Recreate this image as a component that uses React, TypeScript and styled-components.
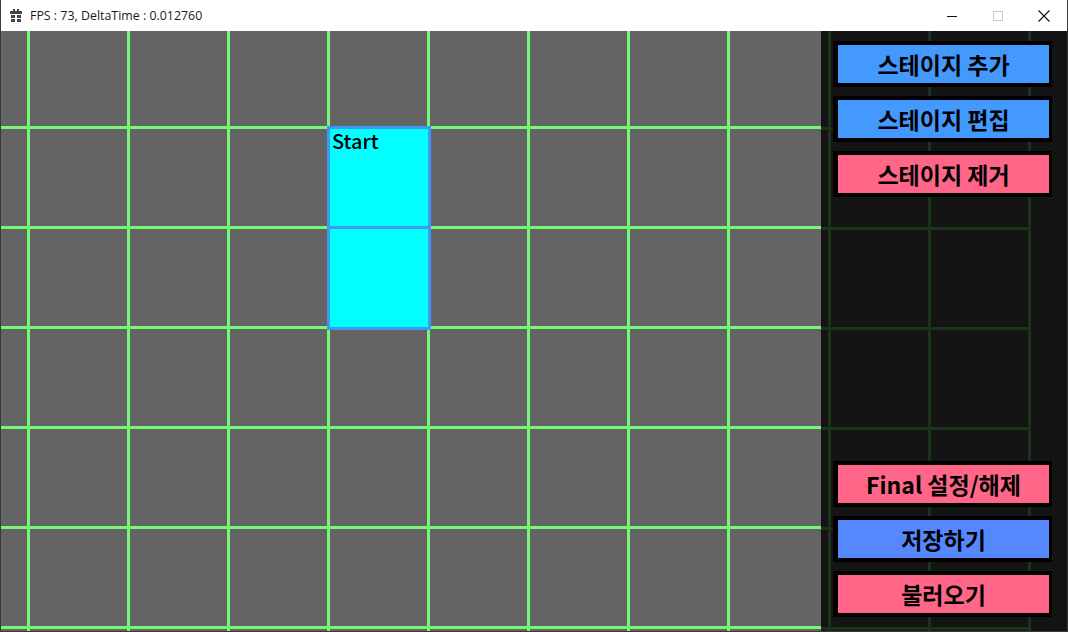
import React from "react";
import styled, { createGlobalStyle } from "styled-components";

const Global = createGlobalStyle`
  html, body { margin: 0; padding: 0; background: #ffffff; }
  body { font-family: "Noto Sans", "Noto Sans CJK KR", sans-serif; }
`;

const Window = styled.div`
  width: 1068px;
  height: 632px;
  box-sizing: border-box;
  display: flex;
  flex-direction: column;
  border-left: 1px solid #3a3a3a;
  border-right: 1px solid #3a3a3a;
  border-bottom: 1px solid #3a3a3a;
  overflow: hidden;
`;

const TitleBar = styled.div`
  height: 31px;
  flex: none;
  display: flex;
  align-items: center;
  background: #ffffff;
  padding-left: 9px;
`;

const TitleText = styled.span`
  font-family: "Open Sans", "Noto Sans", sans-serif;
  font-size: 12.4px;
  color: #1a1a1a;
  margin-left: 8px;
`;

const Controls = styled.div`
  margin-left: auto;
  display: flex;
  height: 100%;
`;

const Ctl = styled.div`
  width: 46px;
  height: 100%;
  display: flex;
  align-items: center;
  justify-content: center;
`;

const Client = styled.div`
  flex: 1;
  display: flex;
  min-height: 0;
`;

const Canvas = styled.div`
  position: relative;
  width: 820px;
  flex: none;
  background-color: #646464;
  background-image:
    linear-gradient(to right, #74f974 0, #74f974 3px, transparent 3px),
    linear-gradient(to bottom, #74f974 0, #74f974 3px, transparent 3px);
  background-size: 100px 100px;
  background-position: 26px 95px;
`;

const Cell = styled.div<{ $top: number }>`
  position: absolute;
  left: 326px;
  top: ${(p) => p.$top}px;
  width: 104px;
  height: 104px;
  box-sizing: border-box;
  background: #00ffff;
  border: 3px solid #3d99f5;
  padding: 0 0 0 2px;
  font-family: "Noto Sans CJK KR", "Noto Sans", sans-serif;
  font-weight: 500;
  font-size: 20px;
  line-height: 23px;
  color: #000;
`;

const Panel = styled.div`
  position: relative;
  flex: 1;
  background: #141414;
  display: flex;
  flex-direction: column;
  justify-content: space-between;
  padding: 10px 0 14px 12px;

  &::before {
    content: "";
    position: absolute;
    left: 0;
    top: 0;
    width: 210px;
    height: 100%;
    background-image:
      linear-gradient(to right, #1b321b 0, #1b321b 3px, transparent 3px),
      linear-gradient(to bottom, #1b321b 0, #1b321b 3px, transparent 3px);
    background-size: 100px 100px;
    background-position: 7px 96px;
  }
`;

const Group = styled.div`
  position: relative;
  display: flex;
  flex-direction: column;
  gap: 9px;
`;

const Button = styled.div<{ $color: string }>`
  width: 219px;
  height: 46px;
  box-sizing: border-box;
  border-style: solid;
  border-color: #000;
  border-width: 4px 3px 4px 5px;
  background: ${(p) => p.$color};
  display: flex;
  align-items: center;
  justify-content: center;
  font-family: "Noto Sans CJK KR", "Noto Sans", sans-serif;
  font-weight: 700;
  font-size: 23px;
  color: #000;
  padding-bottom: 1px;
`;

const BLUE = "#4499ff";
const PINK = "#ff6688";
const SAVE = "#5588ff";

export default function App() {
  return (
    <>
      <Global />
      <Window>
        <TitleBar>
          <svg width="12" height="13" viewBox="0 0 12 13">
            <g fill="#444">
              <rect x="3" y="0" width="2" height="2" />
              <rect x="7" y="0" width="2" height="2" />
              <rect x="0" y="2" width="12" height="3" />
              <rect x="1" y="6" width="4" height="3" />
              <rect x="7" y="6" width="4" height="3" />
              <rect x="1" y="10" width="4" height="3" />
              <rect x="7" y="10" width="4" height="3" />
            </g>
          </svg>
          <TitleText>FPS : 73, DeltaTime : 0.012760</TitleText>
          <Controls>
            <Ctl>
              <svg width="12" height="12" viewBox="0 0 12 12">
                <rect x="1" y="6" width="10" height="1" fill="#111" />
              </svg>
            </Ctl>
            <Ctl>
              <svg width="12" height="12" viewBox="0 0 12 12">
                <rect x="1.5" y="1.5" width="9" height="9" fill="none" stroke="#c8c8c8" />
              </svg>
            </Ctl>
            <Ctl>
              <svg width="12" height="12" viewBox="0 0 12 12">
                <path d="M0.5 0.5 L11.5 11.5 M11.5 0.5 L0.5 11.5" stroke="#111" strokeWidth="1.1" />
              </svg>
            </Ctl>
          </Controls>
        </TitleBar>
        <Client>
          <Canvas>
            <Cell $top={95}>Start</Cell>
            <Cell $top={195} />
          </Canvas>
          <Panel>
            <Group>
              <Button $color={BLUE}>스테이지 추가</Button>
              <Button $color={BLUE}>스테이지 편집</Button>
              <Button $color={PINK}>스테이지 제거</Button>
            </Group>
            <Group>
              <Button $color={PINK}>Final 설정/해제</Button>
              <Button $color={SAVE}>저장하기</Button>
              <Button $color={PINK}>불러오기</Button>
            </Group>
          </Panel>
        </Client>
      </Window>
    </>
  );
}
